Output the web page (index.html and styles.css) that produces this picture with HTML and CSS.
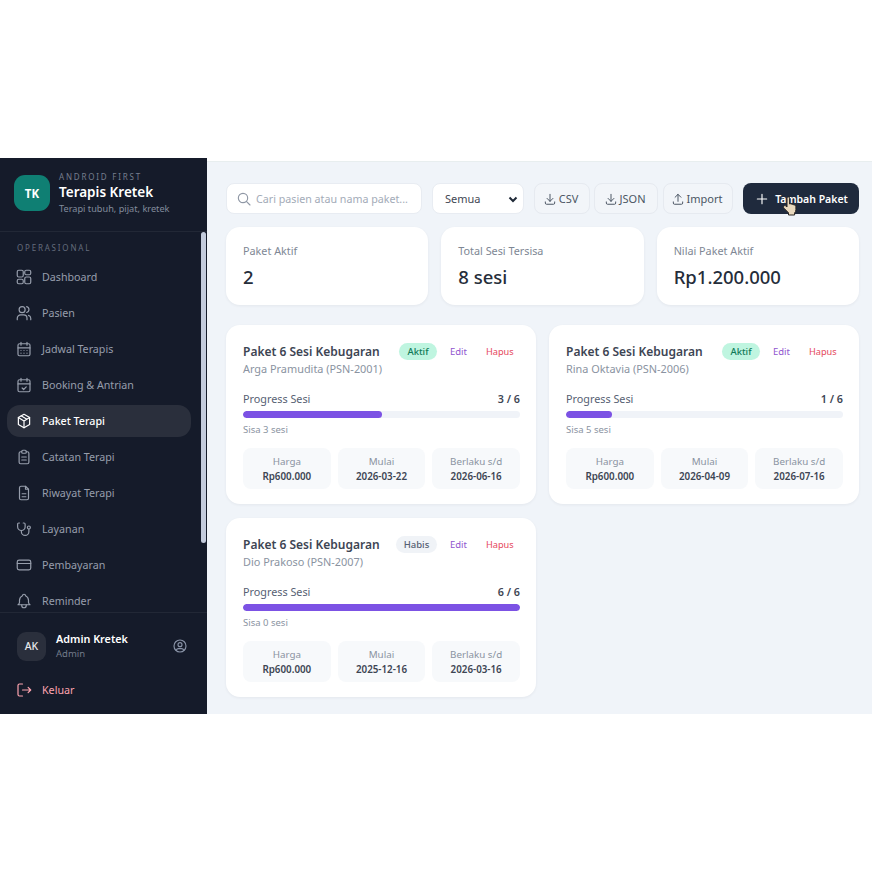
FILE: index.html
```html
<!DOCTYPE html>
<html>
<head>
    <meta charset="UTF-8">
    <title>Terapis Kretek: Paket Terapi</title>
    <link rel="stylesheet" href="styles.css">
</head>
<body>
<div class="app">
    <aside class="sidebar">
        <div class="brand">
            <div class="brand-logo">TK</div>
            <div class="brand-text">
                <div class="brand-over">ANDROID FIRST</div>
                <div class="brand-name">Terapis Kretek</div>
                <div class="brand-sub">Terapi tubuh, pijat, kretek</div>
            </div>
        </div>

        <nav class="nav">
            <div class="nav-title">OPERASIONAL</div>
            <a class="nav-item"><svg class="ico" viewBox="0 0 24 24"><rect x="3" y="3" width="8" height="9" rx="2"/><rect x="13" y="3" width="8" height="6" rx="2"/><rect x="3" y="15" width="8" height="6" rx="2"/><rect x="13" y="12" width="8" height="9" rx="2"/></svg>Dashboard</a>
            <a class="nav-item"><svg class="ico" viewBox="0 0 24 24"><circle cx="9.500" cy="7.500" r="4"/><path d="M3 21v-2a4.500 4.500 0 0 1 4.500-4.500h4A4.500 4.500 0 0 1 16 19v2"/><path d="M15.500 3.500a4 4 0 0 1 0 7.800"/><path d="M21 21v-2a4 4 0 0 0-3-3.800"/></svg>Pasien</a>
            <a class="nav-item"><svg class="ico" viewBox="0 0 24 24"><rect x="4" y="5" width="16" height="16" rx="2"/><path d="M16 3v4M8 3v4M4 10.500h16M8 14h.01M12 14h.01M16 14h.01M8 17.500h.01M12 17.500h.01M16 17.500h.01"/></svg>Jadwal Terapis</a>
            <a class="nav-item"><svg class="ico" viewBox="0 0 24 24"><rect x="4" y="5" width="16" height="16" rx="2"/><path d="M16 3v4M8 3v4M4 10.500h16M9.500 16l2 2 3.500-3.500"/></svg>Booking &amp; Antrian</a>
            <a class="nav-item active"><svg class="ico" viewBox="0 0 24 24"><path d="M12 3l7.500 4.300v9.400L12 21l-7.500-4.300V7.300z"/><path d="M12 12l7.500-4.700M12 12v9M12 12L4.500 7.300M8.200 5.100l7.600 4.500"/></svg>Paket Terapi</a>
            <a class="nav-item"><svg class="ico" viewBox="0 0 24 24"><path d="M9 5H7.500A2 2 0 0 0 5.500 7v12a2 2 0 0 0 2 2h9a2 2 0 0 0 2-2V7a2 2 0 0 0-2-2H15"/><rect x="9" y="3" width="6" height="4" rx="1.500"/><path d="M9 12h6M9 16h6"/></svg>Catatan Terapi</a>
            <a class="nav-item"><svg class="ico" viewBox="0 0 24 24"><path d="M14 3H8a2 2 0 0 0-2 2v14a2 2 0 0 0 2 2h8a2 2 0 0 0 2-2V7z"/><path d="M14 3v4h4M9.500 13h5M9.500 17h5"/></svg>Riwayat Terapi</a>
            <a class="nav-item"><svg class="ico" viewBox="0 0 24 24"><path d="M6 4H5a1.500 1.500 0 0 0-1.500 1.500V9a5 5 0 0 0 10 0V5.500A1.500 1.500 0 0 0 12 4h-1"/><path d="M8.500 14v1.500a5 5 0 0 0 10 0V12"/><circle cx="18.500" cy="10" r="2"/></svg>Layanan</a>
            <a class="nav-item"><svg class="ico" viewBox="0 0 24 24"><rect x="3" y="5.500" width="18" height="13" rx="2.500"/><path d="M3 10h18"/></svg>Pembayaran</a>
            <a class="nav-item"><svg class="ico" viewBox="0 0 24 24"><path d="M10 5a2 2 0 0 1 4 0 7 7 0 0 1 4 6v3a4 4 0 0 0 2 3H4a4 4 0 0 0 2-3v-3a7 7 0 0 1 4-6"/><path d="M9 17v1a3 3 0 0 0 6 0v-1"/></svg>Reminder</a>
            <div class="nav-thumb"></div>
        </nav>

        <div class="side-foot">
            <div class="user">
                <div class="user-avatar">AK</div>
                <div class="user-text">
                    <div class="user-name">Admin Kretek</div>
                    <div class="user-role">Admin</div>
                </div>
                <svg class="ico user-ico" viewBox="0 0 24 24"><circle cx="12" cy="12" r="9"/><circle cx="12" cy="10" r="3"/><path d="M6.200 18.500a4 4 0 0 1 3.800-2.500h4a4 4 0 0 1 3.800 2.500"/></svg>
            </div>
            <a class="logout"><svg class="ico" viewBox="0 0 24 24"><path d="M10 4H6a2 2 0 0 0-2 2v12a2 2 0 0 0 2 2h4"/><path d="M10 12h11M17.500 8.500L21 12l-3.500 3.500"/></svg>Keluar</a>
        </div>
    </aside>

    <main class="main">
        <div class="toolbar">
            <div class="search">
                <svg class="ico" viewBox="0 0 24 24"><circle cx="10.500" cy="10.500" r="7"/><path d="M21 21l-5.500-5.500"/></svg>
                <span>Cari pasien atau nama paket...</span>
            </div>
            <div class="filter">
                <span>Semua</span>
                <svg viewBox="0 0 12 12"><path d="M2.500 4.500L6 8l3.500-3.500"/></svg>
            </div>
            <button class="btn btn-csv"><svg class="ico" viewBox="0 0 24 24"><path d="M4 17v2a2 2 0 0 0 2 2h12a2 2 0 0 0 2-2v-2M7 11l5 5 5-5M12 4v12"/></svg>CSV</button>
            <button class="btn btn-json"><svg class="ico" viewBox="0 0 24 24"><path d="M4 17v2a2 2 0 0 0 2 2h12a2 2 0 0 0 2-2v-2M7 11l5 5 5-5M12 4v12"/></svg>JSON</button>
            <button class="btn btn-import"><svg class="ico" viewBox="0 0 24 24"><path d="M4 17v2a2 2 0 0 0 2 2h12a2 2 0 0 0 2-2v-2M7 9l5-5 5 5M12 4v12"/></svg>Import</button>
            <button class="btn-add"><svg class="ico" viewBox="0 0 24 24"><path d="M12 5v14M5 12h14"/></svg>Tambah Paket
                <svg class="cursor" viewBox="0 0 16 20"><path d="M5 2.200a1.300 1.300 0 0 1 2.600 0V8l.6-.2a1.200 1.200 0 0 1 1.600.6l.5-.1a1.200 1.200 0 0 1 1.500.8l.5-.1a1.200 1.200 0 0 1 1.600 1v3.500c0 1.500-.5 2.600-1.300 3.500V19H6.500v-2.200L2 12.200c-.9-1-.5-2.100.3-2.500.8-.3 1.400 0 2.700 1.300z"/></svg>
            </button>
        </div>

        <div class="stats">
            <div class="stat"><div class="stat-label">Paket Aktif</div><div class="stat-value">2</div></div>
            <div class="stat"><div class="stat-label">Total Sesi Tersisa</div><div class="stat-value">8 sesi</div></div>
            <div class="stat"><div class="stat-label">Nilai Paket Aktif</div><div class="stat-value">Rp1.200.000</div></div>
        </div>

        <div class="cards">
            <div class="card">
                <div class="card-head">
                    <div class="card-title">Paket 6 Sesi Kebugaran</div>
                    <span class="badge badge-on">Aktif</span>
                    <a class="link-edit">Edit</a>
                    <a class="link-del">Hapus</a>
                </div>
                <div class="card-patient">Arga Pramudita (PSN-2001)</div>
                <div class="progress-row"><span>Progress Sesi</span><b>3 / 6</b></div>
                <div class="bar"><div class="bar-fill" style="width:50%"></div></div>
                <div class="remain">Sisa 3 sesi</div>
                <div class="facts">
                    <div class="fact"><span>Harga</span><b>Rp600.000</b></div>
                    <div class="fact"><span>Mulai</span><b>2026-03-22</b></div>
                    <div class="fact"><span>Berlaku s/d</span><b>2026-06-16</b></div>
                </div>
            </div>

            <div class="card">
                <div class="card-head">
                    <div class="card-title">Paket 6 Sesi Kebugaran</div>
                    <span class="badge badge-on">Aktif</span>
                    <a class="link-edit">Edit</a>
                    <a class="link-del">Hapus</a>
                </div>
                <div class="card-patient">Rina Oktavia (PSN-2006)</div>
                <div class="progress-row"><span>Progress Sesi</span><b>1 / 6</b></div>
                <div class="bar"><div class="bar-fill" style="width:16.67%"></div></div>
                <div class="remain">Sisa 5 sesi</div>
                <div class="facts">
                    <div class="fact"><span>Harga</span><b>Rp600.000</b></div>
                    <div class="fact"><span>Mulai</span><b>2026-04-09</b></div>
                    <div class="fact"><span>Berlaku s/d</span><b>2026-07-16</b></div>
                </div>
            </div>

            <div class="card">
                <div class="card-head">
                    <div class="card-title">Paket 6 Sesi Kebugaran</div>
                    <span class="badge badge-off">Habis</span>
                    <a class="link-edit">Edit</a>
                    <a class="link-del">Hapus</a>
                </div>
                <div class="card-patient">Dio Prakoso (PSN-2007)</div>
                <div class="progress-row"><span>Progress Sesi</span><b>6 / 6</b></div>
                <div class="bar"><div class="bar-fill" style="width:100%"></div></div>
                <div class="remain">Sisa 0 sesi</div>
                <div class="facts">
                    <div class="fact"><span>Harga</span><b>Rp600.000</b></div>
                    <div class="fact"><span>Mulai</span><b>2025-12-16</b></div>
                    <div class="fact"><span>Berlaku s/d</span><b>2026-03-16</b></div>
                </div>
            </div>
        </div>
    </main>
</div>
</body>
</html>
```

FILE: styles.css
```css
* {
    box-sizing: border-box;
}

html, body {
    margin: 0;
    height: 100%;
}

body {
    display: flex;
    align-items: center;
    background: #fff;
    font-family: "Noto Sans", "Open Sans", sans-serif;
    color: #1f2937;
}

.app {
    display: flex;
    width: 100%;
    height: 556px;
    overflow: hidden;
    background: #f0f4f9;
}

.ico {
    width: 16px;
    height: 16px;
    flex: none;
    fill: none;
    stroke: currentColor;
    stroke-width: 1.7;
    stroke-linecap: round;
    stroke-linejoin: round;
}

/* sidebar */
.sidebar {
    width: 207px;
    flex: none;
    display: flex;
    flex-direction: column;
    background: #151b2a;
}

.brand {
    height: 74px;
    flex: none;
    display: flex;
    align-items: center;
    gap: 9px;
    padding: 0 14px 3px;
    border-bottom: 1px solid #222836;
}

.brand-logo {
    width: 36px;
    height: 36px;
    flex: none;
    display: flex;
    align-items: center;
    justify-content: center;
    border-radius: 11px;
    background: #0f7f73;
    color: #fff;
    font-size: 11.500px;
    font-weight: 700;
}

.brand-over {
    font-size: 8px;
    line-height: 11px;
    letter-spacing: 1.800px;
    color: #767e8e;
}

.brand-name {
    margin-top: 1px;
    font-size: 13.500px;
    line-height: 19px;
    font-weight: 600;
    color: #fff;
}

.brand-sub {
    font-size: 9.200px;
    line-height: 14px;
    color: #828b9c;
}

.nav {
    position: relative;
    flex: 1;
    min-height: 0;
    overflow: hidden;
    padding: 10px 16px 0 7px;
}

.nav-title {
    height: 11px;
    padding-left: 10px;
    margin-bottom: 8px;
    font-size: 8px;
    line-height: 11px;
    letter-spacing: 1.800px;
    color: #646c7c;
}

.nav-item {
    display: flex;
    align-items: center;
    gap: 9px;
    height: 32px;
    margin-bottom: 4px;
    padding-left: 8px;
    border-radius: 13px;
    font-size: 10.700px;
    color: #979eac;
}

.nav-item .ico {
    width: 18px;
    height: 18px;
    stroke-width: 1.600;
}

.nav-item.active {
    background: #2a2f3c;
    color: #fff;
    font-weight: 500;
}

.nav-thumb {
    position: absolute;
    top: 0;
    right: 1px;
    width: 5px;
    height: 311px;
    border-radius: 3px;
    background: #c3cbdc;
}

.side-foot {
    height: 102px;
    flex: none;
    padding: 18px 17px 0;
    border-top: 1px solid #222836;
}

.user {
    display: flex;
    align-items: center;
    gap: 10px;
}

.user-avatar {
    width: 29px;
    height: 29px;
    flex: none;
    display: flex;
    align-items: center;
    justify-content: center;
    border-radius: 9px;
    background: #2a2f3c;
    color: #e5e7eb;
    font-size: 10.500px;
    font-weight: 500;
}

.user-text {
    flex: 1;
}

.user-name {
    font-size: 10.800px;
    line-height: 16px;
    font-weight: 600;
    color: #fff;
}

.user-role {
    font-size: 9.500px;
    line-height: 14px;
    color: #737b8b;
}

.user-ico {
    margin-right: 2px;
    color: #8a94a8;
}

.logout {
    display: flex;
    align-items: center;
    gap: 9px;
    margin-top: 20px;
    margin-left: -2px;
    font-size: 10.700px;
    color: #fda4af;
}

.logout .ico {
    width: 18px;
    height: 18px;
    stroke-width: 1.600;
}

/* main */
.main {
    flex: 1;
    min-width: 0;
    padding: 25px 13px 0 19px;
    border-top: 3px solid #fff;
    box-shadow: inset 0 1px #e8eeef;
}

.toolbar {
    display: flex;
    height: 31px;
    margin-top: -3px;
    margin-bottom: 13px;
}

.search {
    width: 196px;
    display: flex;
    align-items: center;
    gap: 4px;
    padding: 0 9px;
    margin-right: 10px;
    border: 1px solid #e8ecf2;
    border-radius: 8px;
    background: #fff;
    color: #a3abb8;
    font-size: 10.700px;
    white-space: nowrap;
}

.search .ico {
    color: #8f97a5;
}

.filter {
    width: 92px;
    display: flex;
    align-items: center;
    justify-content: space-between;
    padding: 0 2px 0 12px;
    margin-right: 10px;
    border: 1px solid #e8ecf2;
    border-radius: 8px;
    background: #fff;
    color: #3f4754;
    font-size: 11px;
}

.filter svg {
    width: 12px;
    height: 12px;
    margin-right: 2px;
    fill: none;
    stroke: #1f2937;
    stroke-width: 2;
}

.btn {
    display: flex;
    align-items: center;
    justify-content: center;
    gap: 2px;
    padding: 0 3px 0 0;
    border: 1px solid #e6eaf0;
    border-radius: 8px;
    background: #f2f5f9;
    color: #4b5563;
    font: inherit;
    font-size: 11px;
}

.btn .ico {
    width: 14px;
    height: 14px;
}

.btn-csv {
    width: 56px;
    margin-right: 4px;
}

.btn-json {
    width: 64px;
    margin-right: 5px;
}

.btn-import {
    width: 70px;
    margin-right: 10px;
}

.btn-add {
    position: relative;
    width: 116px;
    display: flex;
    align-items: center;
    justify-content: center;
    gap: 5px;
    padding: 0;
    border: 0;
    border-radius: 8px;
    background: #1f2a3d;
    color: #fff;
    font: inherit;
    font-size: 10.500px;
    font-weight: 600;
}

.btn-add .ico {
    width: 16px;
    height: 16px;
}

.cursor {
    position: absolute;
    left: 39px;
    top: 13px;
    width: 16px;
    height: 20px;
    fill: #e8d8bd;
    stroke: #2b2622;
    stroke-width: 1;
    stroke-linejoin: round;
}

.stats {
    display: grid;
    grid-template-columns: repeat(3, 1fr);
    gap: 13px;
    margin-bottom: 20px;
}

.stat {
    height: 78px;
    padding: 15px 17px 0;
    border-radius: 14px;
    background: #fff;
    box-shadow: 0 1px 3px rgba(30, 41, 59, .06);
}

.stat-label {
    font-size: 10.800px;
    line-height: 17px;
    color: #7e8794;
}

.stat-value {
    margin-top: 5px;
    font-size: 18.500px;
    line-height: 26px;
    font-weight: 500;
    color: #252d3a;
}

.cards {
    display: grid;
    grid-template-columns: repeat(2, 1fr);
    gap: 14px 13px;
}

.card {
    height: 179px;
    padding: 18px 16px 0 17px;
    border-radius: 14px;
    background: #fff;
    box-shadow: 0 1px 3px rgba(30, 41, 59, .06);
}

.card-head {
    display: flex;
    align-items: center;
    height: 17px;
}

.card-title {
    flex: 1;
    font-size: 12px;
    font-weight: 600;
    color: #3d4553;
    white-space: nowrap;
}

.badge {
    width: 38px;
    height: 17px;
    margin-right: 13px;
    display: flex;
    align-items: center;
    justify-content: center;
    border-radius: 9px;
    font-size: 9.500px;
    font-weight: 500;
}

.badge-on {
    background: #bff5e0;
    color: #0f7a58;
}

.badge-off {
    width: 41px;
    margin-left: -3px;
    background: #f0f3f7;
    color: #566072;
}

.link-edit {
    width: 36px;
    font-size: 9.500px;
    color: #9156cf;
}

.link-del {
    width: 34px;
    font-size: 9.200px;
    color: #e5485d;
}

.card-patient {
    margin-top: 1px;
    font-size: 10.900px;
    line-height: 16px;
    color: #8a93a1;
}

.progress-row {
    display: flex;
    justify-content: space-between;
    margin-top: 14px;
    font-size: 10.800px;
    line-height: 16px;
    color: #566072;
}

.progress-row b {
    font-weight: 600;
    color: #3d4553;
}

.bar {
    height: 7px;
    margin-top: 4px;
    border-radius: 4px;
    background: #f0f3f8;
    overflow: hidden;
}

.bar-fill {
    height: 100%;
    border-radius: 4px;
    background: #7c52e4;
}

.remain {
    margin-top: 5px;
    font-size: 9.500px;
    line-height: 14px;
    color: #8a93a1;
}

.facts {
    display: grid;
    grid-template-columns: repeat(3, 1fr);
    gap: 7px;
    margin-top: 11px;
}

.fact {
    height: 41px;
    display: flex;
    flex-direction: column;
    align-items: center;
    justify-content: center;
    border-radius: 8px;
    background: #f7f9fb;
    font-size: 9.800px;
    line-height: 15px;
}

.fact span {
    color: #8a93a1;
}

.fact b {
    font-weight: 600;
    color: #3d4553;
}
```
